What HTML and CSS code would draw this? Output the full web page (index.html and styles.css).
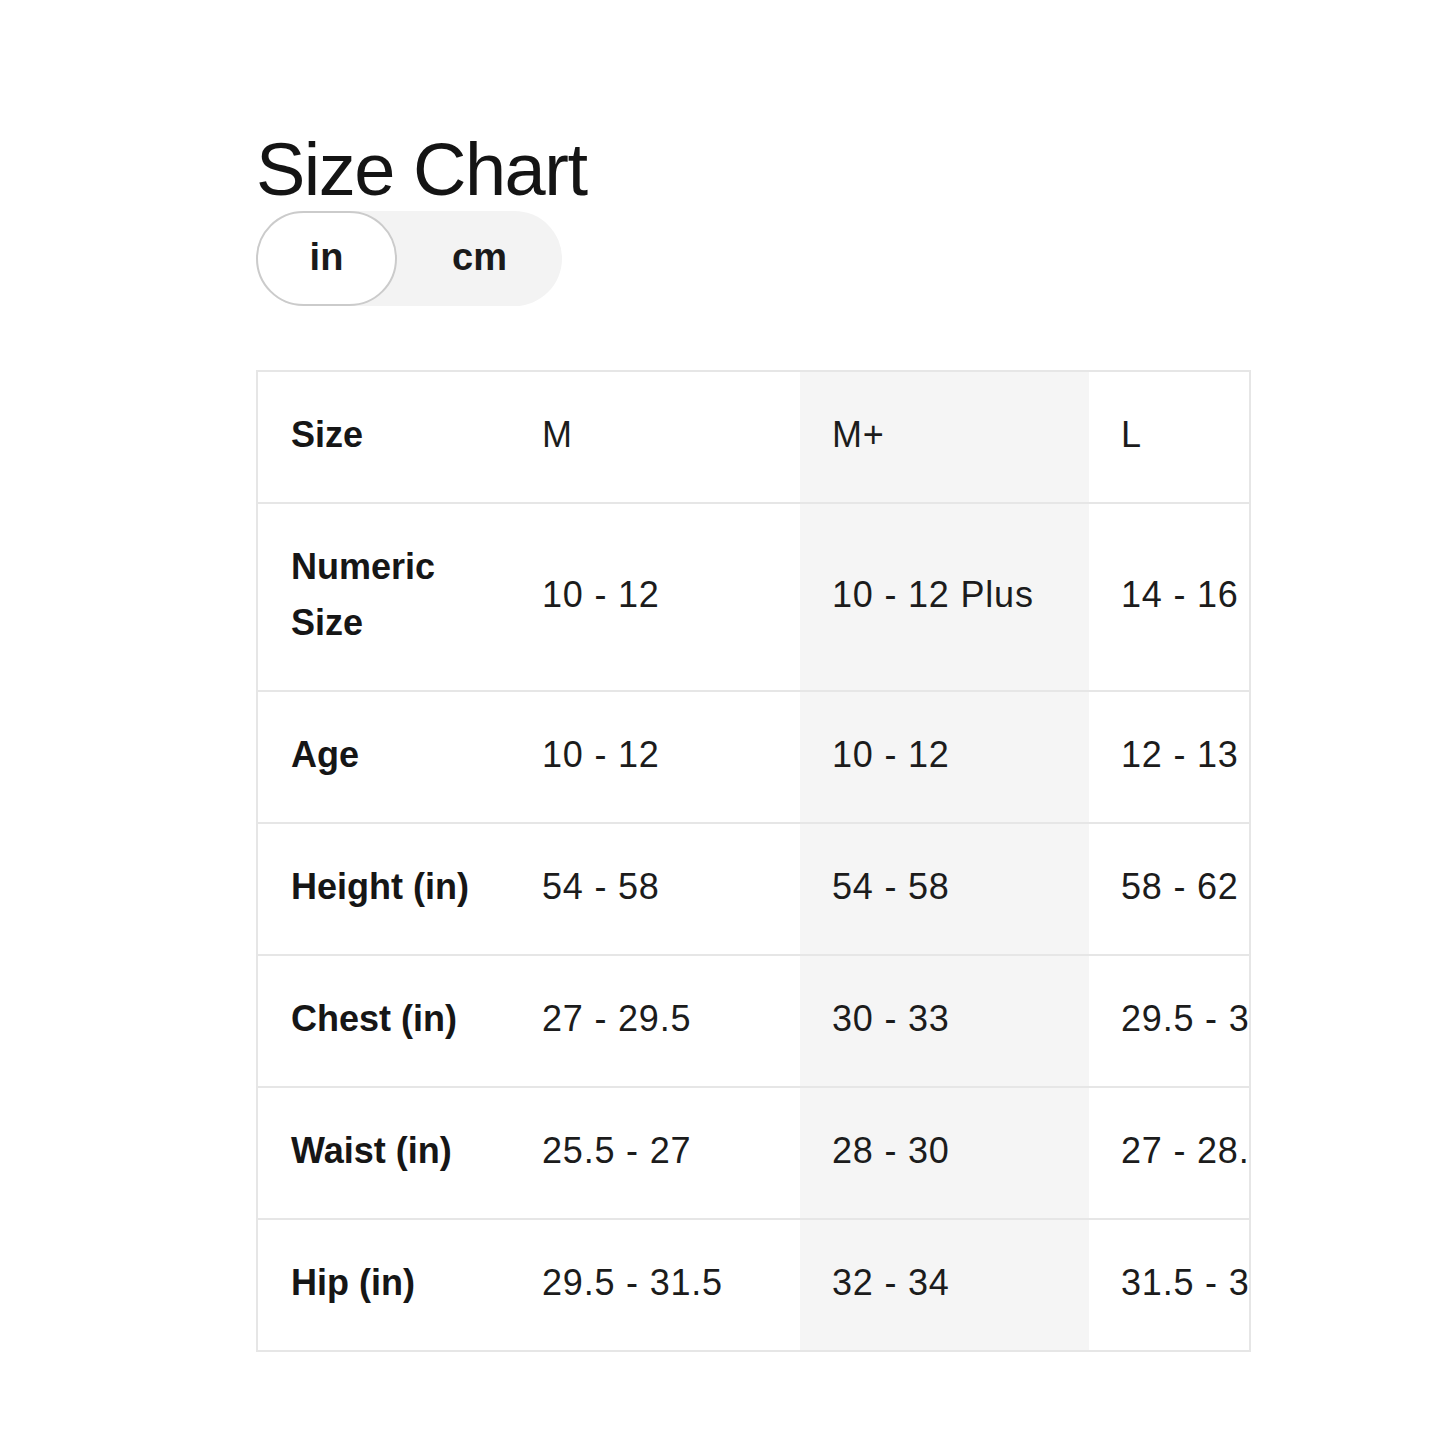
FILE: index.html
```html
<!DOCTYPE html>
<html lang="en">
<head>
<meta charset="utf-8">
<title>Size Chart</title>
<link rel="stylesheet" href="styles.css">
</head>
<body>
<main class="page">
  <h1 class="title">Size Chart</h1>
  <div class="units">
    <button class="unit unit-active">in</button>
    <button class="unit unit-cm">cm</button>
  </div>
  <div class="table-wrap">
    <table class="chart">
      <colgroup>
        <col class="c-label">
        <col class="c-val">
        <col class="c-val2">
        <col class="c-val">
      </colgroup>
      <tbody>
        <tr><th>Size</th><td>M</td><td class="hl">M+</td><td>L</td></tr>
        <tr><th>Numeric Size</th><td>10 - 12</td><td class="hl">10 - 12 Plus</td><td>14 - 16</td></tr>
        <tr><th>Age</th><td>10 - 12</td><td class="hl">10 - 12</td><td>12 - 13</td></tr>
        <tr><th>Height (in)</th><td>54 - 58</td><td class="hl">54 - 58</td><td>58 - 62</td></tr>
        <tr><th>Chest (in)</th><td>27 - 29.5</td><td class="hl">30 - 33</td><td>29.5 - 32</td></tr>
        <tr><th>Waist (in)</th><td>25.5 - 27</td><td class="hl">28 - 30</td><td>27 - 28.5</td></tr>
        <tr><th>Hip (in)</th><td>29.5 - 31.5</td><td class="hl">32 - 34</td><td>31.5 - 34</td></tr>
      </tbody>
    </table>
  </div>
</main>
</body>
</html>
```

FILE: styles.css
```css
html, body {
  margin: 0;
  padding: 0;
  background: #ffffff;
}

body {
  font-family: "Liberation Sans", Arial, sans-serif;
  color: #1a1a1a;
}

.page {
  padding: 133px 0 0 256px;
}

.title {
  margin: 0;
  font-size: 74px;
  font-weight: 400;
  line-height: 1;
  letter-spacing: -1.5px;
  color: #141414;
}

.units {
  margin-top: 4px;
  display: inline-flex;
  width: 306px;
  height: 95px;
  border-radius: 48px;
  background: #f3f3f3;
}

.unit {
  font-family: inherit;
  font-size: 38px;
  font-weight: 700;
  color: #1a1a1a;
  border: 0;
  background: transparent;
  padding: 0;
  cursor: pointer;
  border-radius: 48px;
  line-height: 1;
  padding-bottom: 4px;
}

.unit-active {
  width: 141px;
  background: #ffffff;
  border: 2px solid #cbcbcb;
}

.unit-cm {
  flex: 1;
}

.table-wrap {
  margin-top: 64px;
  width: 995px;
  box-sizing: border-box;
  border: 2px solid #e6e6e6;
  overflow: hidden;
}

.chart {
  border-collapse: collapse;
  table-layout: fixed;
  width: 1121px;
}

.c-label { width: 252px; }
.c-val { width: 290px; }
.c-val2 { width: 289px; }

.chart th,
.chart td {
  padding: 35px 20px 39px 32px;
  font-size: 36px;
  line-height: 56px;
  text-align: left;
  vertical-align: middle;
  white-space: nowrap;
  border-top: 2px solid #e6e6e6;
}

.chart tr:first-child th,
.chart tr:first-child td {
  border-top: 0;
}

.chart th {
  padding-left: 33px;
  padding-right: 40px;
  font-weight: 700;
  white-space: normal;
  color: #161616;
}

.chart td {
  font-weight: 400;
  letter-spacing: 0.8px;
  color: #1c1c1c;
}

.chart td.hl {
  background: #f5f5f5;
}
```
